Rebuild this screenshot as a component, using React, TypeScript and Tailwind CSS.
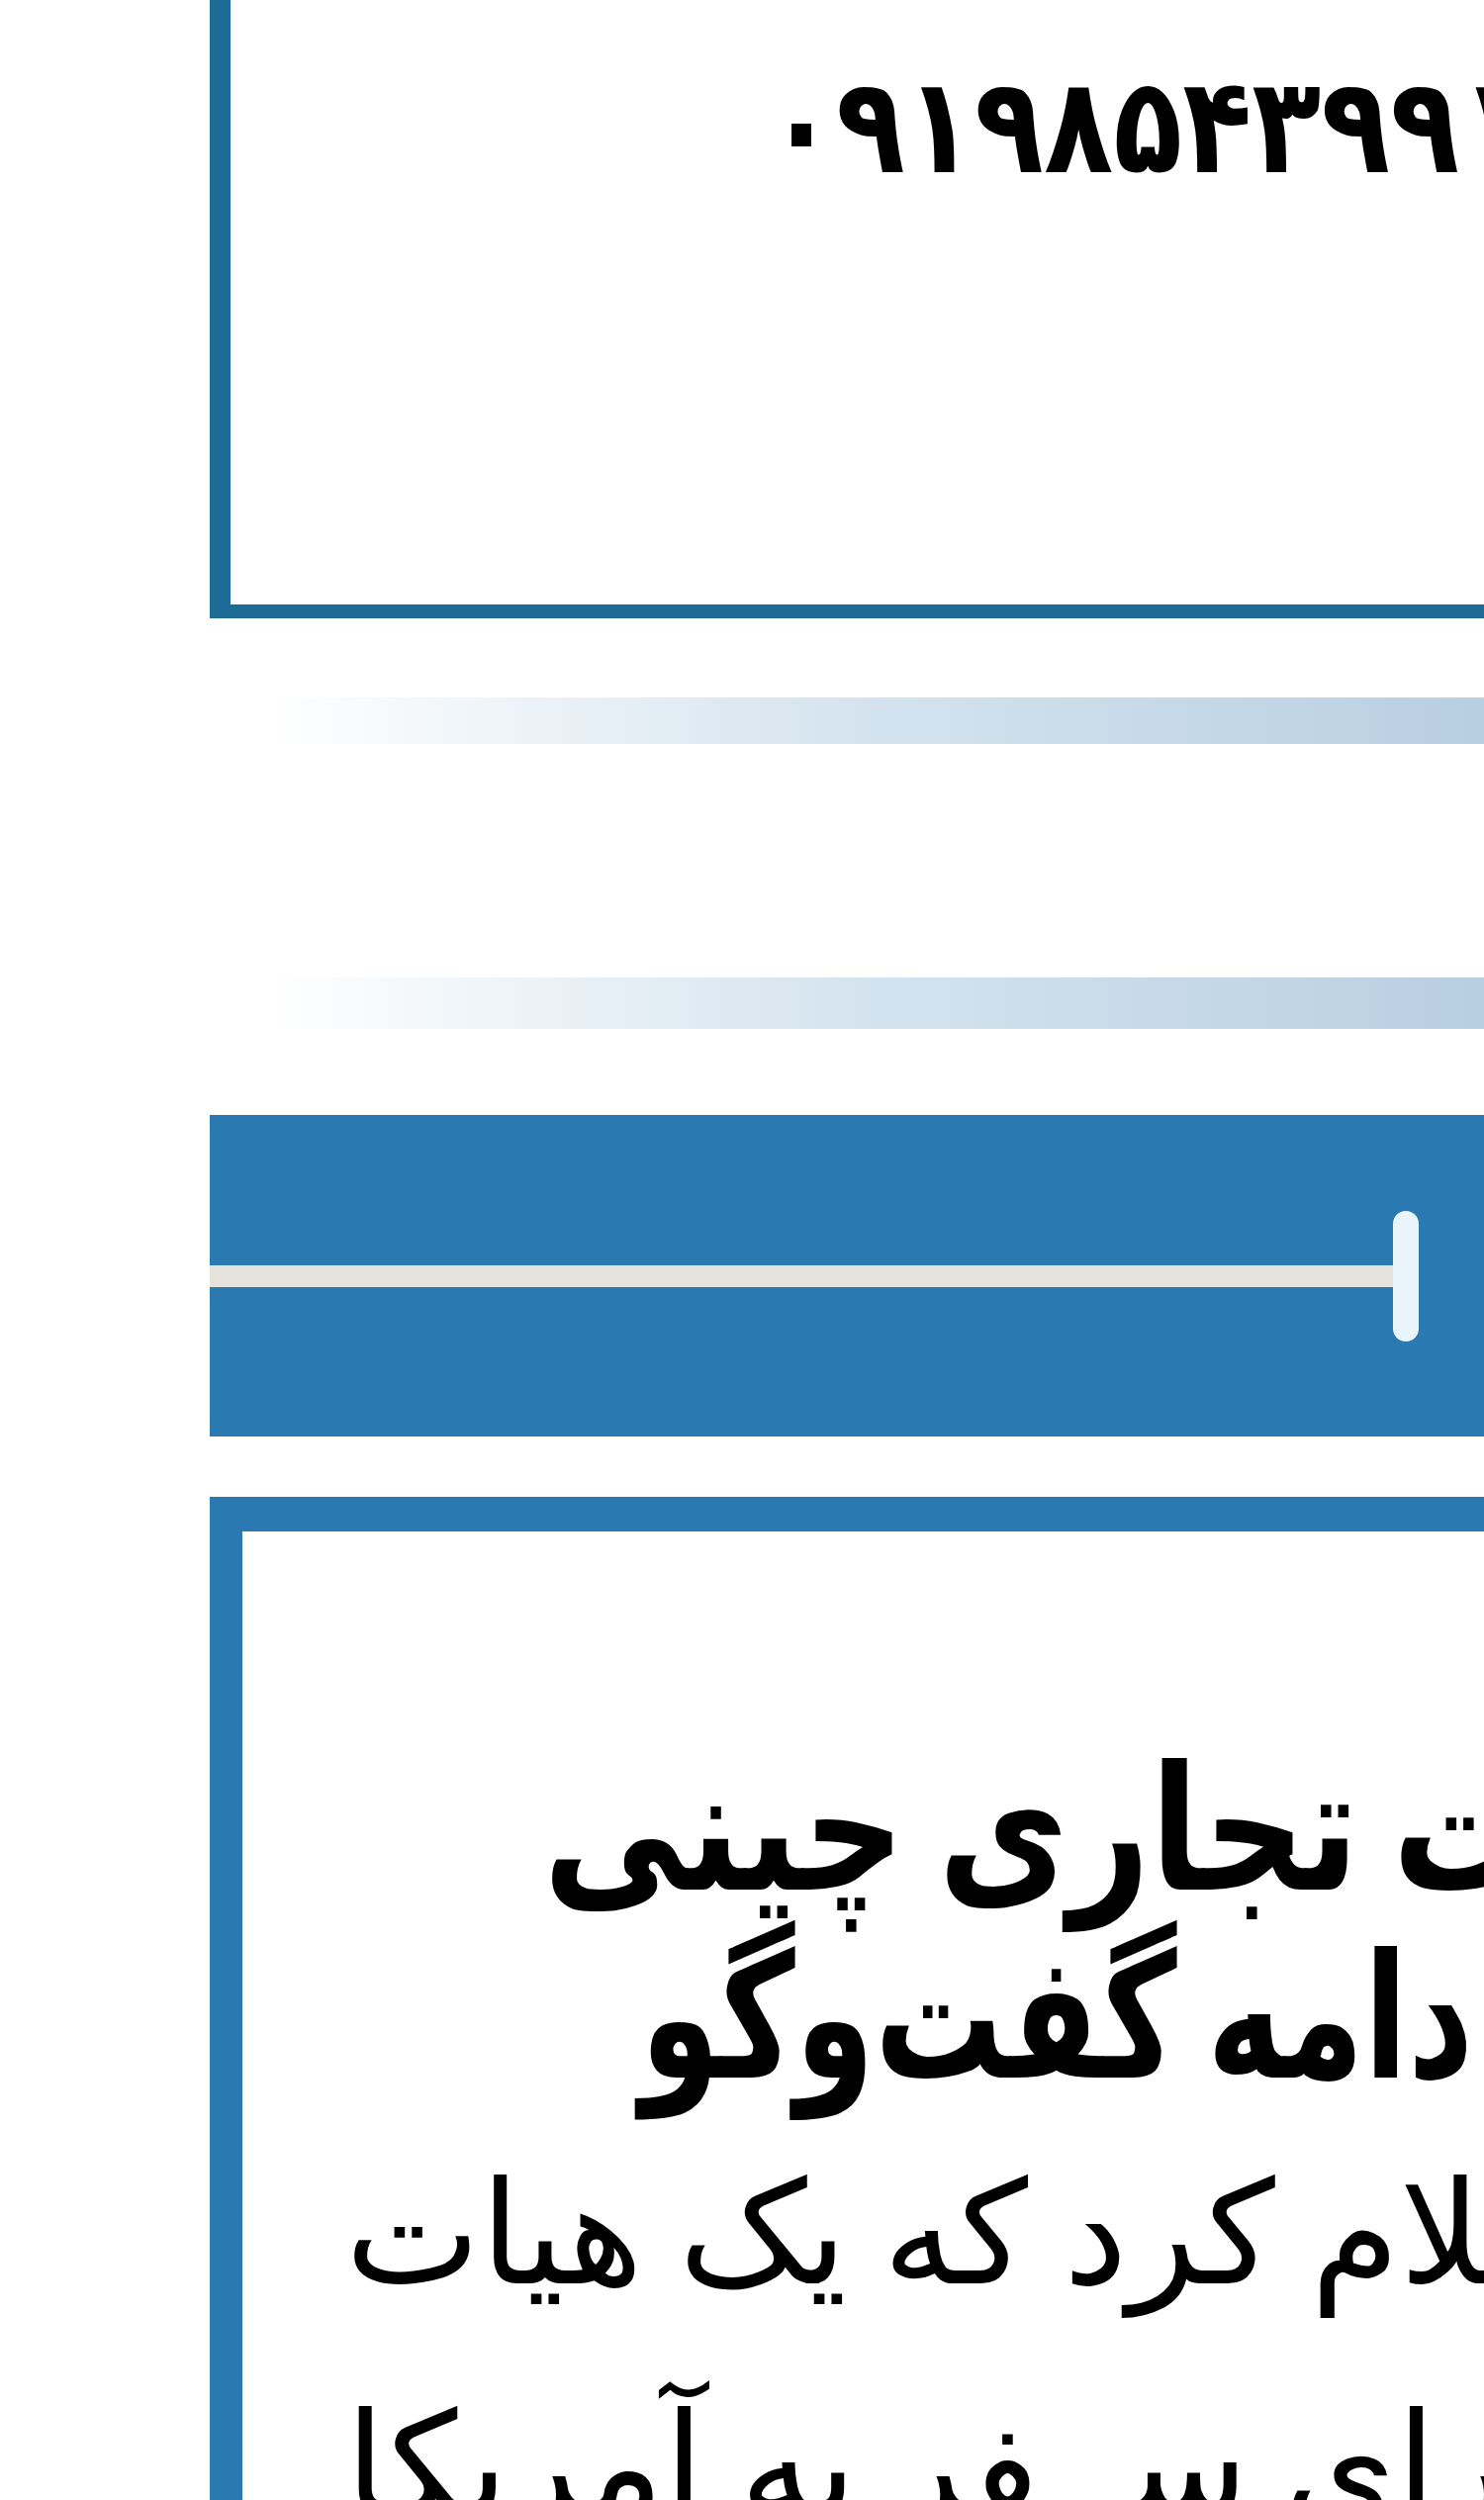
import React from 'react'

// A right-to-left line whose sentence end sits on the left margin;
// the start of the sentence runs on past the right edge of the page.
function RtlLine(props: { children: React.ReactNode; className: string }) {
  return (
    <p dir="rtl" className={`w-max origin-left whitespace-nowrap text-black ${props.className}`}>
      {props.children}
    </p>
  )
}

export default function App() {
  return (
    <div className="h-[2527px] w-[1500px] overflow-hidden bg-white pl-[212px] font-['DejaVu_Sans',sans-serif]">
      {/* contact box */}
      <div className="h-[625px] w-[1400px] border-b-[14px] border-l-[21px] border-[#1f6b98] pt-[60px]">
        <p
          dir="ltr"
          className="ml-[542px] w-max origin-left scale-x-[0.85] whitespace-nowrap text-[135px] font-bold leading-none tracking-[7px] text-black"
        >
          ۰۹۱۹۸۵۴۳۹۹۱
        </p>
      </div>

      {/* section dividers */}
      <div className="ml-[58px] mt-[80px] h-[47px] w-[1300px] bg-linear-to-r from-white via-[#d5e4ef] via-45% to-[#b5cce0]" />
      <div className="h-[236px]" />
      <div className="ml-[58px] h-[52px] w-[1300px] bg-linear-to-r from-white via-[#d5e4ef] via-45% to-[#b5cce0]" />

      {/* news block header */}
      <div className="mt-[87px] flex h-[325px] w-[1400px] items-center bg-[#2a7ab1]">
        <div className="h-[22px] w-[1196px] bg-[#e6e3df]" />
        <div className="h-[132px] w-[26px] rounded-full bg-[#e9f5fb]" />
      </div>

      {/* news item */}
      <div className="mt-[61px] h-[1100px] w-[1400px] border-l-[33px] border-t-[35px] border-[#2a7ab1] pt-[207px]">
        <RtlLine className="ml-[304px] scale-x-[0.82] text-[175px] font-bold leading-[190px] [word-spacing:-20px]">
          سفر هیات تجاری چینی
        </RtlLine>
        <RtlLine className="ml-[402px] scale-x-[0.74] text-[175px] font-bold leading-[190px] [word-spacing:-20px]">
          {'به آمریکا برای ادامه گفت\u200cوگو'}
        </RtlLine>
        <RtlLine className="ml-[104px] mt-[6px] text-[145px] leading-[234px] [word-spacing:-10px]">
          وزارت بازرگانی چین اعلام کرد که یک هیات
        </RtlLine>
        <RtlLine className="ml-[104px] text-[145px] leading-[234px] [word-spacing:-10px]">
          تجاری این کشور برای ســفر به آمریکا
        </RtlLine>
      </div>
    </div>
  )
}
